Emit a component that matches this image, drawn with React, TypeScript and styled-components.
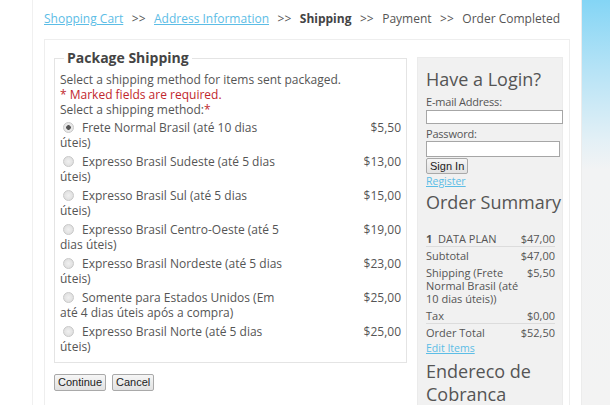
import React from 'react';
import styled, { createGlobalStyle } from 'styled-components';

const GlobalStyle = createGlobalStyle`
    html, body {
        margin: 0;
        padding: 0;
        background: #fff;
    }
    body {
        font-family: 'Open Sans', 'Noto Sans', sans-serif;
        color: #555;
        font-size: 12px;
    }
`;

const Page = styled.div`
    display: flex;
    width: 610px;
    height: 405px;
    overflow: hidden;
`;

const Gutter = styled.div`
    width: 32px;
    flex: none;
`;

const Main = styled.div`
    width: 550px;
    flex: none;
    border-left: 1px solid #f0f0f0;
    border-right: 1px solid #ececec;
    padding: 0 11px 0 11px;
    box-sizing: border-box;
`;

const Strip = styled.div`
    flex: 1;
    background: linear-gradient(to bottom, #84d5f5 0px, #b6e3f6 70px, #e3f0f6 140px, #f2f3f4 170px, #f3f3f3 100%);
`;

const Crumbs = styled.div`
    padding-top: 10px;
    height: 29px;
    font-size: 12px;
    line-height: 18px;
    color: #555;
    white-space: nowrap;
`;

const CrumbLink = styled.a`
    color: #5cbde6;
    text-decoration: underline;
`;

const CrumbSep = styled.span`
    margin: 0 8.5px;
`;

const CrumbCurrent = styled.b`
    color: #444;
`;

const ContentBox = styled.div`
    border: 1px solid #eee;
    border-bottom: none;
    padding: 10px 8px 0 9px;
    height: 400px;
    display: flex;
    gap: 10px;
    align-items: flex-start;
`;

const Column = styled.div`
    width: 353px;
    flex: none;
`;

const Fieldset = styled.fieldset`
    margin: 0;
    padding: 6px 5px 6px 5px;
    border: 1px solid #e4e4e4;
    min-width: 0;
`;

const Legend = styled.legend`
    padding: 0 3px;
    margin-left: 4px;
    font-weight: bold;
    font-size: 14px;
    line-height: 16px;
    color: #444;
`;

const Line = styled.div<{ $red?: boolean }>`
    line-height: 15px;
    color: ${(p) => (p.$red ? '#c1272d' : '#555')};
`;

const Star = styled.span`
    color: #c1272d;
`;

const Options = styled.div`
    display: flex;
    flex-direction: column;
    margin-top: 1px;
`;

const OptionRow = styled.div`
    display: flex;
    justify-content: space-between;
    padding: 2px 0;
    line-height: 15px;
`;

const OptionLabel = styled.div`
    width: 250px;
`;

const Radio = styled.span<{ $checked?: boolean }>`
    display: inline-block;
    width: 9px;
    height: 9px;
    border-radius: 50%;
    border: 1px solid #c8c8c8;
    background: ${(p) =>
        p.$checked
            ? 'radial-gradient(circle, #555 0 2px, #e8e8e8 2.6px)'
            : 'radial-gradient(circle, #f0f0f0 0, #dadada 100%)'};
    margin: 0 8px 0 3px;
    vertical-align: -1px;
`;

const Price = styled.div`
    text-align: right;
`;

const Buttons = styled.div`
    display: flex;
    gap: 6px;
    margin-top: 11px;
`;

const Button = styled.button`
    display: block;
    font-family: 'Liberation Sans', Arial, sans-serif;
    font-size: 11px;
    color: #222;
    background: linear-gradient(to bottom, #f6f6f6, #e2e2e2);
    border: 1px solid #a9a9a9;
    border-radius: 2px;
    padding: 0 3px;
    height: 17px;
    line-height: 15px;
`;

const SignIn = styled(Button)`
    height: 16px;
    margin-top: 1px;
`;

const Sidebar = styled.div`
    width: 146px;
    flex: none;
    margin-top: 7px;
    background: #f1f1f1;
    border: 1px solid #ebebeb;
    padding: 10px 0 0 8px;
    box-sizing: border-box;
    height: 400px;
    font-size: 11px;
`;

const SideTitle = styled.div<{ $gap?: number }>`
    font-size: 18px;
    line-height: 23px;
    color: #555;
    margin-top: ${(p) => p.$gap ?? 0}px;
`;

const FieldLabel = styled.div<{ $gap: number }>`
    line-height: 15px;
    letter-spacing: -0.2px;
    margin-top: ${(p) => p.$gap}px;
`;

const Input = styled.div<{ $w: number; $h: number; $gap: number }>`
    width: ${(p) => p.$w}px;
    height: ${(p) => p.$h}px;
    background: #fff;
    border: 1px solid #a6a6a6;
    margin-top: ${(p) => p.$gap}px;
`;

const SmallLink = styled.a`
    display: block;
    font-size: 10.5px;
    line-height: 14px;
    color: #5cbde6;
    text-decoration: underline;
`;

const SumTable = styled.div`
    width: 129px;
    margin-top: 16px;
`;

const SumRow = styled.div<{ $line?: boolean }>`
    display: flex;
    justify-content: space-between;
    line-height: 13px;
    padding: 2px 0 1px;
    border-bottom: 1px solid ${(p) => (p.$line ? '#dcdcdc' : 'transparent')};
`;

const SumLabel = styled.div`
    flex: none;
    white-space: nowrap;
`;

const options = [
    { l1: 'Frete Normal Brasil (até 10 dias', l2: 'úteis)', price: '$5,50', checked: true },
    { l1: 'Expresso Brasil Sudeste (até 5 dias', l2: 'úteis)', price: '$13,00' },
    { l1: 'Expresso Brasil Sul (até 5 dias', l2: 'úteis)', price: '$15,00' },
    { l1: 'Expresso Brasil Centro-Oeste (até 5', l2: 'dias úteis)', price: '$19,00' },
    { l1: 'Expresso Brasil Nordeste (até 5 dias', l2: 'úteis)', price: '$23,00' },
    { l1: 'Somente para Estados Unidos (Em', l2: 'até 4 dias úteis após a compra)', price: '$25,00' },
    { l1: 'Expresso Brasil Norte (até 5 dias', l2: 'úteis)', price: '$25,00' },
];

export default function App() {
    return (
        <Page>
            <GlobalStyle />
            <Gutter />
            <Main>
                <Crumbs>
                    <CrumbLink>Shopping Cart</CrumbLink>
                    <CrumbSep>&gt;&gt;</CrumbSep>
                    <CrumbLink>Address Information</CrumbLink>
                    <CrumbSep>&gt;&gt;</CrumbSep>
                    <CrumbCurrent>Shipping</CrumbCurrent>
                    <CrumbSep>&gt;&gt;</CrumbSep>
                    Payment
                    <CrumbSep>&gt;&gt;</CrumbSep>
                    Order Completed
                </Crumbs>
                <ContentBox>
                    <Column>
                        <Fieldset>
                            <Legend>Package Shipping</Legend>
                            <Line>Select a shipping method for items sent packaged.</Line>
                            <Line $red>* Marked fields are required.</Line>
                            <Line>
                                Select a shipping method:<Star>*</Star>
                            </Line>
                            <Options>
                                {options.map((o) => (
                                    <OptionRow key={o.l1}>
                                        <OptionLabel>
                                            <Radio $checked={o.checked} />
                                            {o.l1}
                                            <br />
                                            {o.l2}
                                        </OptionLabel>
                                        <Price>{o.price}</Price>
                                    </OptionRow>
                                ))}
                            </Options>
                        </Fieldset>
                        <Buttons>
                            <Button>Continue</Button>
                            <Button>Cancel</Button>
                        </Buttons>
                    </Column>
                    <Sidebar>
                        <SideTitle>Have a Login?</SideTitle>
                        <FieldLabel $gap={3}>E-mail Address:</FieldLabel>
                        <Input $w={135} $h={12} $gap={1} />
                        <FieldLabel $gap={2}>Password:</FieldLabel>
                        <Input $w={132} $h={14} $gap={0} />
                        <SignIn>Sign In</SignIn>
                        <SmallLink>Register</SmallLink>
                        <SideTitle $gap={3}>Order Summary</SideTitle>
                        <SumTable>
                            <SumRow $line>
                                <SumLabel>
                                    <b>1</b>&nbsp; DATA PLAN
                                </SumLabel>
                                <div>$47,00</div>
                            </SumRow>
                            <SumRow>
                                <SumLabel>Subtotal</SumLabel>
                                <div>$47,00</div>
                            </SumRow>
                            <SumRow>
                                <SumLabel>
                                    Shipping (Frete
                                    <br />
                                    Normal Brasil (até
                                    <br />
                                    10 dias úteis))
                                </SumLabel>
                                <div>$5,50</div>
                            </SumRow>
                            <SumRow $line>
                                <SumLabel>Tax</SumLabel>
                                <div>$0,00</div>
                            </SumRow>
                            <SumRow>
                                <SumLabel>Order Total</SumLabel>
                                <div>$52,50</div>
                            </SumRow>
                        </SumTable>
                        <SmallLink>Edit Items</SmallLink>
                        <SideTitle $gap={5}>Endereco de Cobranca</SideTitle>
                    </Sidebar>
                </ContentBox>
            </Main>
            <Strip />
        </Page>
    );
}
